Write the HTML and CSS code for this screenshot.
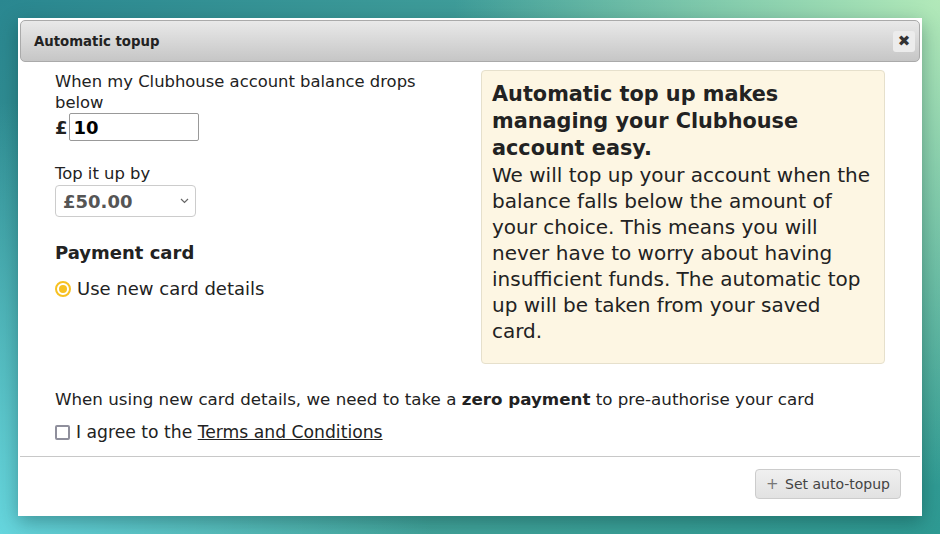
FILE: index.html
```html
<!DOCTYPE html>
<html lang="en">
<head>
  <meta charset="UTF-8">
  <title>Automatic topup</title>
  <link rel="stylesheet" href="styles.css">
</head>
<body>
  <div class="dialog">
    <div class="dialog-header">
      <span class="dialog-title">Automatic topup</span>
      <button class="close-btn" type="button">&#10006;</button>
    </div>

    <div class="dialog-body">
      <div class="columns">
        <div class="form-col">
          <label class="field-label" for="threshold">When my Clubhouse account balance drops below</label>
          <div class="amount-row">
            <span class="currency">£</span>
            <input type="text" id="threshold" class="amount-input" value="10">
          </div>

          <label class="field-label top-label" for="topup">Top it up by</label>
          <div class="select-box">
            <span class="select-value">£50.00</span>
            <svg class="chevron" width="9" height="6" viewBox="0 0 9 6"><path d="M1 1 L4.5 4.5 L8 1" fill="none" stroke="#666" stroke-width="1.2"/></svg>
          </div>

          <h3 class="section-title">Payment card</h3>
          <div class="radio-row">
            <span class="radio"><span class="radio-dot"></span></span>
            <span>Use new card details</span>
          </div>
        </div>

        <div class="info-box">
          <div class="info-title">Automatic top up makes managing your Clubhouse account easy.</div>
          <div class="info-text">We will top up your account when the balance falls below the amount of your choice. This means you will never have to worry about having insufficient funds. The automatic top up will be taken from your saved card.</div>
        </div>
      </div>

      <p class="notice">When using new card details, we need to take a <b>zero payment</b> to pre-authorise your card</p>
      <div class="agree-row">
        <span class="checkbox"></span>
        <span>I agree to the <a href="#" class="terms">Terms and Conditions</a></span>
      </div>
    </div>

    <div class="dialog-footer">
      <button class="action-btn" type="button"><span class="plus">+</span> Set auto-topup</button>
    </div>
  </div>
</body>
</html>
```

FILE: styles.css
```css
body {
  margin: 0;
  padding: 18px;
  height: 534px;
  box-sizing: border-box;
  font-family: "DejaVu Sans", Verdana, sans-serif;
  color: #222;
  background:
    radial-gradient(circle at 100% 0%, #b2e9b9 0, rgba(178, 233, 185, 0) 45%),
    radial-gradient(circle at 0% 100%, #66d6de 0, rgba(102, 214, 222, 0) 40%),
    linear-gradient(135deg, #2a8790 0%, #4aa89e 50%, #2e9a93 100%);
  overflow: hidden;
}

.dialog {
  width: 904px;
  height: 498px;
  box-sizing: border-box;
  padding: 2px;
  background: #fff;
  display: flex;
  flex-direction: column;
  box-shadow: 0 6px 18px rgba(0, 40, 40, 0.35);
}

.dialog-header {
  height: 42px;
  box-sizing: border-box;
  border: 1px solid #aaa;
  border-radius: 5px;
  background: linear-gradient(#e9e9e9, #c6c6c6);
  display: flex;
  align-items: center;
  justify-content: space-between;
  padding: 0 4px 0 13px;
}

.dialog-title {
  font-size: 13.3px;
  font-weight: bold;
  color: #222;
}

.close-btn {
  width: 22px;
  height: 21px;
  border: none;
  border-radius: 3px;
  background: #ececec;
  color: #333;
  font-size: 15px;
  font-family: "DejaVu Sans", sans-serif;
  padding: 0;
  line-height: 21px;
}

.dialog-body {
  flex: 1;
  padding: 8px 35px 0;
}

.columns {
  display: grid;
  grid-template-columns: 1fr 404px;
  gap: 40px;
}

.field-label {
  display: block;
  font-size: 16.4px;
  line-height: 21px;
  padding-top: 1px;
}

.amount-row {
  display: flex;
  align-items: center;
  gap: 1px;
}

.currency {
  font-size: 18px;
  font-weight: bold;
}

.amount-input {
  width: 130px;
  height: 28px;
  box-sizing: border-box;
  border: 1px solid #999;
  border-radius: 2px;
  font-family: "DejaVu Sans", sans-serif;
  font-size: 18px;
  font-weight: bold;
  padding: 0 4px;
  color: #000;
}

.top-label {
  margin-top: 21px;
}

.select-box {
  width: 141px;
  height: 32px;
  box-sizing: border-box;
  border: 1px solid #ccc;
  border-radius: 4px;
  display: flex;
  align-items: center;
  justify-content: space-between;
  padding: 0 6px 0 7px;
  margin-top: 1px;
}

.select-value {
  font-size: 18px;
  font-weight: bold;
  color: #555;
}

.section-title {
  font-size: 18px;
  margin: 25px 0 0;
  line-height: 22px;
}

.radio-row {
  display: flex;
  align-items: center;
  gap: 6px;
  font-size: 18px;
  margin-top: 14px;
}

.radio {
  width: 16px;
  height: 16px;
  box-sizing: border-box;
  border: 2px solid #f7c122;
  border-radius: 50%;
  display: flex;
  align-items: center;
  justify-content: center;
}

.radio-dot {
  width: 8px;
  height: 8px;
  border-radius: 50%;
  background: #f7c122;
}

.info-box {
  background: #fdf6e3;
  border: 1px solid #e6e0cc;
  border-radius: 4px;
  padding: 10px 10px 19px 10px;
  height: 294px;
  box-sizing: border-box;
}

.info-title {
  font-size: 20.8px;
  font-weight: bold;
  line-height: 27px;
}

.info-text {
  font-size: 20px;
  line-height: 26px;
}

.notice {
  font-size: 16.7px;
  margin: 24px 0 0;
  line-height: 22px;
}

.agree-row {
  display: flex;
  align-items: center;
  gap: 6px;
  font-size: 17.2px;
  margin-top: 12px;
}

.checkbox {
  width: 15px;
  height: 15px;
  box-sizing: border-box;
  border: 2px solid #8f8f9c;
  border-radius: 2px;
}

.terms {
  color: #222;
}

.dialog-footer {
  border-top: 1px solid #c8c8c8;
  height: 58px;
  box-sizing: border-box;
  display: flex;
  align-items: center;
  justify-content: flex-end;
  padding: 0 19px 4px;
}

.action-btn {
  height: 30px;
  border: 1px solid #ccc;
  border-radius: 4px;
  background: linear-gradient(#f0f0f0, #e2e2e2);
  font-family: "DejaVu Sans", sans-serif;
  font-size: 14px;
  color: #444;
  padding: 0 10px;
}

.plus {
  color: #777;
  font-size: 15px;
  margin-right: 2px;
}
```
